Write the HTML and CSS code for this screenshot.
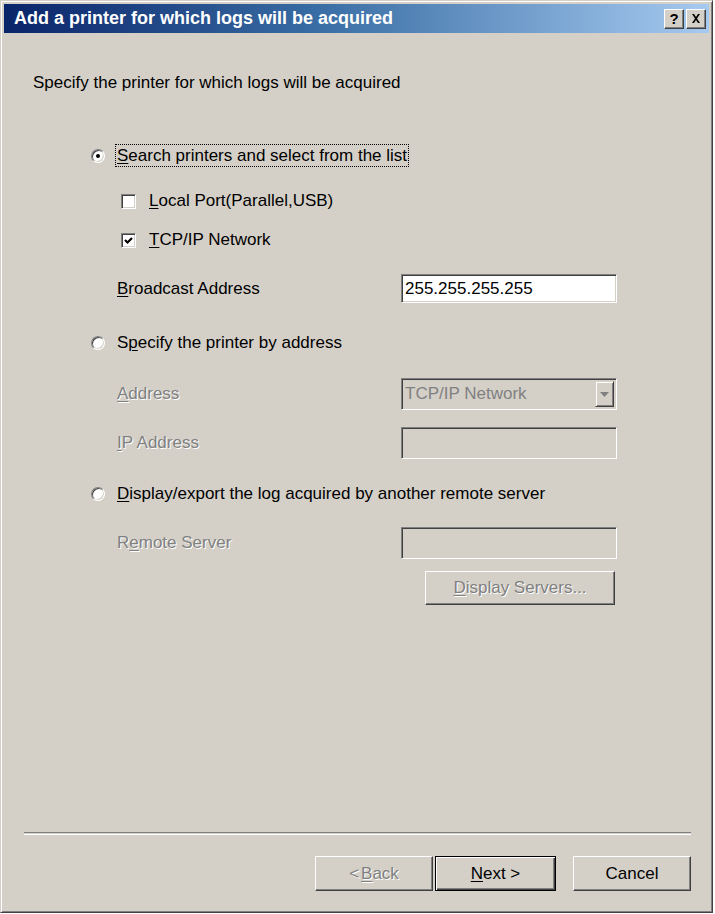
FILE: index.html
```html
<!DOCTYPE html>
<html>
<head>
<meta charset="utf-8">
<title>Add a printer for which logs will be acquired</title>
<link rel="stylesheet" href="styles.css">
</head>
<body>
<div class="window">
  <div class="titlebar">
    <span class="title">Add a printer for which logs will be acquired</span>
    <div class="tb-buttons">
      <span class="tb-btn">?</span>
      <span class="tb-btn close">
        <svg width="10" height="9" viewBox="0 0 10 9"><path d="M1 0h2l2 3 2-3h2L6 4.5 9 9H7L5 6 3 9H1l3-4.5z" fill="#000"/></svg>
      </span>
    </div>
  </div>
  <div class="content">
    <div class="intro">Specify the printer for which logs will be acquired</div>

    <div class="row radio-row r1">
      <span class="radio checked"></span>
      <span class="focus"><u>S</u>earch printers and select from the list</span>
    </div>

    <div class="row check-row c1">
      <span class="check"></span>
      <span class="lbl"><u>L</u>ocal Port(Parallel,USB)</span>
    </div>

    <div class="row check-row c2">
      <span class="check">
        <svg width="9" height="9" viewBox="0 0 9 9"><polyline points="1,4 3.5,6.5 8,2" fill="none" stroke="#000" stroke-width="2.2"/></svg>
      </span>
      <span class="lbl"><u>T</u>CP/IP Network</span>
    </div>

    <div class="row field f-broadcast">
      <span class="flabel"><u>B</u>roadcast Address</span>
      <div class="edit">255.255.255.255</div>
    </div>

    <div class="row radio-row r2">
      <span class="radio"></span>
      <span class="lbl">S<u>p</u>ecify the printer by address</span>
    </div>

    <div class="row field tall f-address">
      <span class="flabel disabled"><u>A</u>ddress</span>
      <div class="combo">
        <span class="combo-text">TCP/IP Network</span>
        <span class="combo-btn">
          <svg width="9" height="5" viewBox="0 0 9 5"><path d="M0 0h9L4.5 5z" fill="#808080"/></svg>
        </span>
      </div>
    </div>

    <div class="row field tall f-ip">
      <span class="flabel disabled"><u>I</u>P Address</span>
      <div class="edit disabled-edit"></div>
    </div>

    <div class="row radio-row r3">
      <span class="radio"></span>
      <span class="lbl"><u>D</u>isplay/export the log acquired by another remote server</span>
    </div>

    <div class="row field tall f-remote">
      <span class="flabel disabled">R<u>e</u>mote Server</span>
      <div class="edit disabled-edit"></div>
    </div>

    <div class="row f-display">
      <span class="button disabled display-btn"><u>D</u>isplay Servers...</span>
    </div>

    <div class="spacer"></div>

    <div class="separator"></div>

    <div class="footer">
      <span class="button disabled"><span class="lt">&lt;</span> <u>B</u>ack</span>
      <span class="button default"><u>N</u>ext &gt;</span>
      <span class="button cancel">Cancel</span>
    </div>
  </div>
</div>
</body>
</html>
```

FILE: styles.css
```css
html, body {
  margin: 0;
  padding: 0;
  background: #ffffff;
}

body {
  font-family: "Liberation Sans", Arial, sans-serif;
  font-size: 17px;
  color: #000;
}

u {
  text-decoration: underline;
  text-underline-offset: 2px;
  text-decoration-thickness: 1px;
}

.window {
  box-sizing: border-box;
  width: 713px;
  height: 913px;
  background: #d4d0c8;
  border: 1px solid;
  border-color: #d4d0c8 #404040 #404040 #d4d0c8;
  box-shadow: inset 1px 1px #ffffff, inset -1px -1px #808080;
  padding: 3px;
  display: flex;
  flex-direction: column;
}

.titlebar {
  height: 29px;
  flex: none;
  background: linear-gradient(to right, #0a246a 0%, #3a6ea5 45%, #a6caf0 100%);
  display: flex;
  align-items: center;
  justify-content: space-between;
  padding: 0 3px 0 10px;
}

.title {
  color: #fff;
  font-weight: bold;
  font-size: 18px;
  white-space: nowrap;
}

.tb-buttons {
  display: flex;
  gap: 2px;
}

.tb-btn {
  box-sizing: border-box;
  width: 20px;
  height: 20px;
  background: #d4d0c8;
  border: 1px solid;
  border-color: #ffffff #404040 #404040 #ffffff;
  box-shadow: inset -1px -1px #808080;
  display: flex;
  align-items: center;
  justify-content: center;
  font-weight: bold;
  font-size: 15px;
  line-height: 1;
}

.content {
  flex: 1;
  display: flex;
  flex-direction: column;
}

.intro {
  margin: 40px 0 0 29px;
  height: 20px;
  line-height: 20px;
}

.row {
  display: flex;
  align-items: center;
  flex: none;
}

.radio-row {
  margin-left: 87px;
  height: 23px;
}

.r1 { margin-top: 51px; }
.r2 { margin-top: 28px; }
.r3 { margin-top: 23px; }

.radio {
  box-sizing: border-box;
  width: 14px;
  height: 14px;
  border-radius: 50%;
  border: 1px solid;
  border-color: #808080 #ffffff #ffffff #808080;
  box-shadow: inset 1px 1px #404040, inset -1px -1px #d4d0c8;
  background: #fff;
  position: relative;
  margin-right: 10px;
  flex: none;
}

.radio.checked::after {
  content: "";
  position: absolute;
  left: 4px;
  top: 4px;
  width: 4px;
  height: 4px;
  border-radius: 50%;
  background: #000;
}

.focus {
  border: 1px dotted #000;
  padding: 0 1px 0 1px;
  line-height: 21px;
  white-space: nowrap;
}

.radio-row .lbl {
  padding-left: 2px;
  line-height: 21px;
  white-space: nowrap;
}

.check-row {
  margin-left: 117px;
  height: 20px;
}

.c1 { margin-top: 24px; }
.c2 { margin-top: 19px; }

.check {
  box-sizing: border-box;
  width: 15px;
  height: 15px;
  border: 1px solid;
  border-color: #808080 #ffffff #ffffff #808080;
  box-shadow: inset 1px 1px #404040, inset -1px -1px #d4d0c8;
  background: #fff;
  margin-right: 13px;
  display: flex;
  align-items: center;
  justify-content: center;
  flex: none;
}

.check-row .lbl {
  line-height: 20px;
  white-space: nowrap;
}

.field {
  margin-left: 113px;
  height: 29px;
}

.field.tall {
  height: 32px;
}

.f-broadcast { margin-top: 24px; }
.f-address { margin-top: 24px; }
.f-ip { margin-top: 17px; }
.f-remote { margin-top: 22px; }

.flabel {
  width: 284px;
  flex: none;
  white-space: nowrap;
}

.disabled {
  color: #808080;
  text-shadow: 1px 1px 0 #ffffff;
}

.edit {
  box-sizing: border-box;
  width: 216px;
  height: 100%;
  background: #fff;
  border: 1px solid;
  border-color: #808080 #ffffff #ffffff #808080;
  box-shadow: inset 1px 1px #404040, inset -1px -1px #d4d0c8;
  padding: 0 3px;
  display: flex;
  align-items: center;
  white-space: nowrap;
}

.edit.disabled-edit {
  background: #d4d0c8;
}

.combo {
  box-sizing: border-box;
  width: 216px;
  height: 100%;
  background: #d4d0c8;
  border: 1px solid;
  border-color: #808080 #ffffff #ffffff #808080;
  box-shadow: inset 1px 1px #404040, inset -1px -1px #d4d0c8;
  padding: 2px 2px 2px 3px;
  display: flex;
  align-items: center;
  justify-content: space-between;
}

.combo-text {
  color: #808080;
  white-space: nowrap;
}

.combo-btn {
  box-sizing: border-box;
  width: 19px;
  height: 100%;
  background: #d4d0c8;
  border: 1px solid;
  border-color: #d4d0c8 #404040 #404040 #d4d0c8;
  box-shadow: inset 1px 1px #ffffff, inset -1px -1px #808080;
  display: flex;
  align-items: center;
  justify-content: center;
}

.f-display {
  margin-top: 12px;
  margin-left: 421px;
  height: 34px;
}

.button {
  box-sizing: border-box;
  height: 35px;
  width: 118px;
  background: #d4d0c8;
  border: 1px solid;
  border-color: #ffffff #404040 #404040 #ffffff;
  box-shadow: inset -1px -1px #808080;
  display: flex;
  align-items: center;
  justify-content: center;
  white-space: nowrap;
}

.display-btn {
  width: 190px;
  height: 34px;
}

.button.default {
  border: 1px solid #000;
  box-shadow: inset 1px 1px #ffffff, inset -1px -1px #404040, inset -2px -2px #808080;
  width: 121px;
}

.button.cancel {
  margin-left: 15px;
}

.spacer {
  flex: 1;
}

.separator {
  height: 1px;
  margin: 0 18px 0 20px;
  border-top: 1px solid #808080;
  border-bottom: 1px solid #ffffff;
  flex: none;
}

.footer {
  margin: 21px 18px 18px 0;
  display: flex;
  justify-content: flex-end;
  gap: 2px;
  flex: none;
}

.lt {
  margin-right: 2px;
}
```
